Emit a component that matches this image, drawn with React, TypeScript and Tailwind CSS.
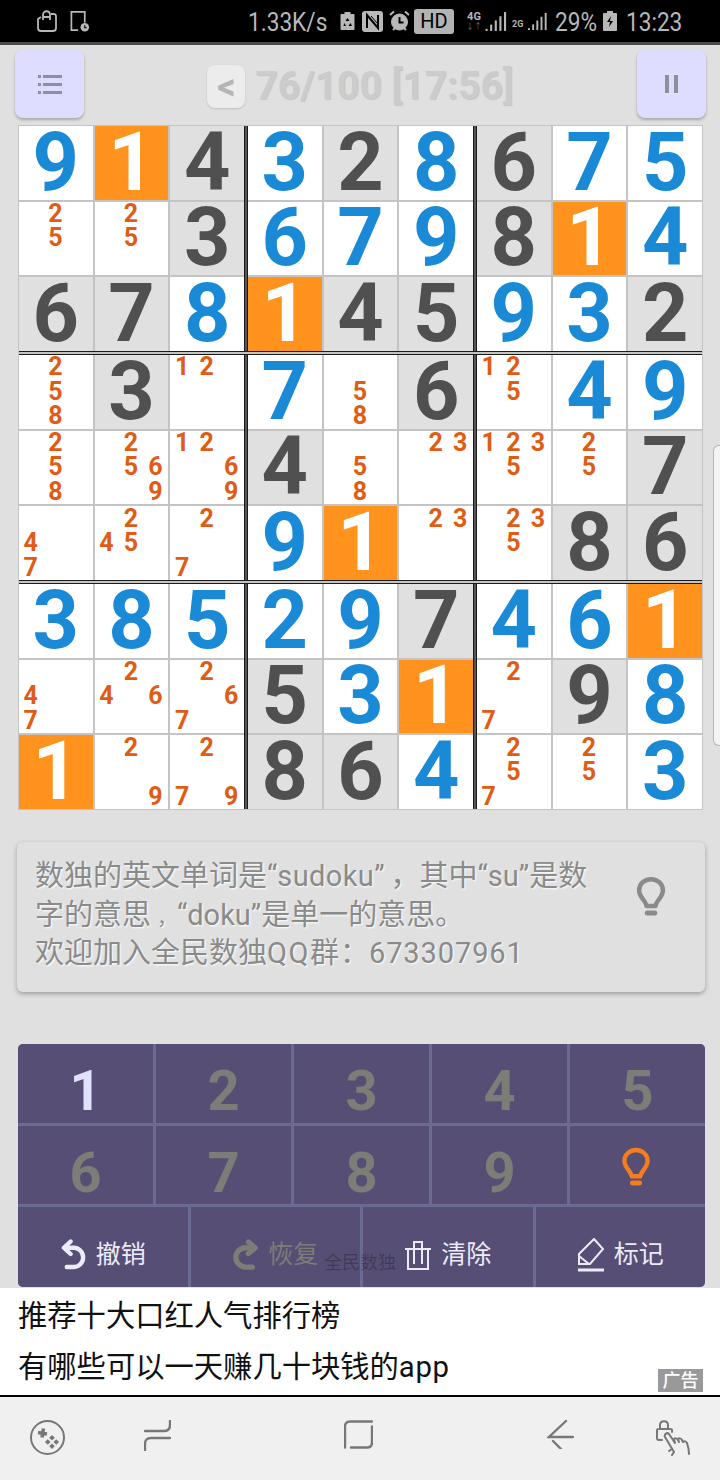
import type { ReactNode } from 'react';

const ROBOTO = "font-['Roboto',_'Noto_Sans_CJK_SC',_sans-serif]";

// b = blue, d = dark on grey, o = orange; digits after "n" are pencil notes
const BOARD: string[][] = [
  ['9b', '1o', '4d', '3b', '2d', '8b', '6d', '7b', '5b'],
  ['n25', 'n25', '3d', '6b', '7b', '9b', '8d', '1o', '4b'],
  ['6d', '7d', '8b', '1o', '4d', '5d', '9b', '3b', '2d'],
  ['n258', '3d', 'n12', '7b', 'n58', '6d', 'n125', '4b', '9b'],
  ['n258', 'n2569', 'n1269', '4d', 'n58', 'n23', 'n1235', 'n25', '7d'],
  ['n47', 'n245', 'n27', '9b', '1o', 'n23', 'n235', '8d', '6d'],
  ['3b', '8b', '5b', '2b', '9b', '7d', '4b', '6b', '1o'],
  ['n47', 'n246', 'n267', '5d', '3b', '1o', 'n27', '9d', '8b'],
  ['1o', 'n29', 'n279', '8d', '6d', '4b', 'n257', 'n25', '3b'],
];

function Cell({ value }: { value: string }) {
  if (value[0] === 'n') {
    return (
      <div className="bg-white grid grid-cols-3 grid-rows-3">
        {[1, 2, 3, 4, 5, 6, 7, 8, 9].map(n => (
          <span key={n} className="flex items-center justify-center pr-[1px] text-[25px] leading-[22px] font-bold text-[#e05c14]">
            {value.includes(String(n)) ? n : ''}
          </span>
        ))}
      </div>
    );
  }
  const kind = value[1];
  const tone = kind === 'b' ? 'bg-white text-[#1a8ad6]' : kind === 'd' ? 'bg-[#e0e0e0] text-[#505050]' : 'bg-[#ff931e] text-white';
  return (
    <div className={`flex items-center justify-center text-[81px] leading-[70px] font-bold ${tone}`}>{value[0]}</div>
  );
}

function Block({ row, col }: { row: number; col: number }) {
  const cells: string[] = [];
  for (let r = row; r < row + 3; r++) {
    for (let c = col; c < col + 3; c++) cells.push(BOARD[r][c]);
  }
  return (
    <div className="w-[225px] h-[225px] grid grid-cols-3 grid-rows-3 gap-[2px]">
      {cells.map((v, i) => <Cell key={i} value={v} />)}
    </div>
  );
}

function BoardRow({ row }: { row: number }) {
  return (
    <div className="flex">
      <Block row={row} col={0} />
      <div className="w-[4px] bg-[#555] border-x border-[#1c1c1c]" />
      <Block row={row} col={3} />
      <div className="w-[4px] bg-[#555] border-x border-[#1c1c1c]" />
      <Block row={row} col={6} />
    </div>
  );
}

function Bulb({ className }: { className: string }) {
  return (
    <svg viewBox="0 0 24 32" className={className} fill="none" stroke="currentColor" strokeWidth="3.6" strokeLinecap="round" strokeLinejoin="round">
      <path d="M12 2.500C6.500 2.500 2.500 6.600 2.500 11.500c0 3.800 2.600 6.200 4.400 9 .8 1.200 1.300 2.200 1.500 3.500h7.200c.2-1.300.7-2.300 1.500-3.500 1.800-2.800 4.400-5.200 4.400-9 0-4.900-4-9-9.500-9z" />
      <path d="M9 29.500h6" strokeWidth="4" />
    </svg>
  );
}

function KeyNum({ n, active }: { n: number; active?: boolean }) {
  return (
    <div className={`flex items-center justify-center pt-[15px] text-[56px] leading-[50px] font-bold ${active ? 'text-[#e0e0ff]' : 'text-[#7d7d78]'}`}>{n}</div>
  );
}

function Action({ icon, label, dim }: { icon: ReactNode; label: string; dim?: boolean }) {
  return (
    <div className={`flex items-center justify-center gap-[9px] pt-[15px] text-[25px] ${dim ? 'text-[#7d7d78]' : 'text-[#ecebfa]'}`}>
      {icon}
      <span>{label}</span>
    </div>
  );
}

function StatusText({ w, ml, children }: { w: string; ml: string; children: ReactNode }) {
  return (
    <span className={`${w} ${ml} block origin-left scale-x-[0.87] whitespace-nowrap pt-[2px] text-[26px] leading-none text-[#b8b8b8]`}>{children}</span>
  );
}

function SignalBars({ className }: { className: string }) {
  return (
    <svg viewBox="0 0 20 20" className={className} fill="#b8b8b8">
      <rect x="0" y="17" width="2" height="2" />
      <rect x="4.400" y="13" width="2" height="6" />
      <rect x="8.800" y="9" width="2" height="10" />
      <rect x="13.200" y="5" width="2" height="14" />
      <rect x="17.600" y="1" width="2" height="18" />
    </svg>
  );
}

export default function App() {
  return (
    <div className={`relative w-[720px] h-[1480px] overflow-hidden flex flex-col bg-[#e0e0e0] ${ROBOTO}`}>
      {/* status bar */}
      <div className="h-[45px] shrink-0 bg-black border-b-[3px] border-[#4a4a4a] flex items-center">
        <svg viewBox="0 0 20 22" className="ml-[37px] w-[20px] h-[22px]" fill="none" stroke="#b8b8b8" strokeWidth="1.8">
          <path d="M4 7L1 9v9c0 2 1 3 3 3h12c2 0 3-1 3-3V6c0-1-1-2-2-2h-3" />
          <path d="M6 10V5c0-5 7-5 7 0v5M6 7h7" />
        </svg>
        <svg viewBox="0 0 20 22" className="ml-[13px] w-[20px] h-[21px]" fill="none" stroke="#b8b8b8" strokeWidth="1.8">
          <path d="M8 20H1V1h14v11" />
          <circle cx="15" cy="17" r="4.500" fill="#b8b8b8" stroke="none" />
          <path d="M15 15v2.500h2" stroke="#000" strokeWidth="1.200" />
        </svg>
        <StatusText w="w-[79px]" ml="ml-[158px]">1.33K/s</StatusText>
        <svg viewBox="0 0 14 18" className="ml-[13px] w-[15px] h-[18px]" fill="#b8b8b8">
          <path d="M4 0h6v2h3c.6 0 1 .4 1 1v14c0 .6-.4 1-1 1H1c-.6 0-1-.4-1-1V3c0-.6.4-1 1-1h3z" />
          <path d="M7 6l2 3H5zM4 11l1.500 3H3zM10 11l1.500 3H8z" fill="#000" />
        </svg>
        <svg viewBox="0 0 21 21" className="ml-[7px] w-[21px] h-[21px]">
          <rect width="21" height="21" rx="3" fill="#b8b8b8" />
          <path d="M5 17V4l11 13V4" fill="none" stroke="#000" strokeWidth="2" />
          <path d="M9 5l6 7" stroke="#000" strokeWidth="1" />
        </svg>
        <svg viewBox="0 0 21 22" className="ml-[6px] w-[21px] h-[22px]" fill="none" stroke="#b8b8b8">
          <circle cx="10.500" cy="12" r="8" fill="#b8b8b8" />
          <path d="M10.500 7v5.500h4" stroke="#000" strokeWidth="2" />
          <path d="M1 5l4-3.500M20 5l-4-3.500M4 20l2-2M17 20l-2-2" strokeWidth="2" />
        </svg>
        <span className="ml-[4px] w-[40px] h-[25px] rounded-[3px] bg-[#b3b3b3] text-black text-[20px] leading-[25px] text-center">HD</span>
        <div className="ml-[12px] w-[16px] flex flex-col items-center text-[#b8b8b8]">
          <span className="text-[11px] leading-[12px] font-bold">4G</span>
          <span className="text-[8px] leading-[8px] text-[#666]">↓↑</span>
        </div>
        <SignalBars className="ml-[3px] w-[22px] h-[21px]" />
        <span className="ml-[5px] w-[16px] text-[9px] font-bold text-[#b8b8b8] mt-[8px]">2G</span>
        <SignalBars className="w-[19px] h-[21px]" />
        <StatusText w="w-[40px]" ml="ml-[8px]">29%</StatusText>
        <svg viewBox="0 0 14 20" className="ml-[8px] w-[14px] h-[20px]" fill="#b8b8b8">
          <path d="M4 0h6v2h3c.6 0 1 .4 1 1v16c0 .6-.4 1-1 1H1c-.6 0-1-.4-1-1V3c0-.6.4-1 1-1h3z" />
          <path d="M8 5L4 11h3l-1 5 4-6H7z" fill="#000" />
        </svg>
        <StatusText w="w-[55px]" ml="ml-[9px]">13:23</StatusText>
      </div>

      {/* title row */}
      <div className="h-[73px] shrink-0 pt-[5px] pl-[15px] pr-[14px] flex items-start">
        <div className="w-[69px] h-[68px] rounded-[8px] bg-[#dedcff] shadow-[0_2px_3px_rgba(0,0,0,0.25)] flex items-center justify-center">
          <svg viewBox="0 0 24 20" className="w-[24px] h-[20px]" fill="#8f8f9c">
            <rect x="0" y="1" width="3" height="3" />
            <rect x="5" y="1" width="19" height="3" />
            <rect x="0" y="9" width="3" height="3" />
            <rect x="5" y="9" width="19" height="3" />
            <rect x="0" y="17" width="3" height="3" />
            <rect x="5" y="17" width="19" height="3" />
          </svg>
        </div>
        <div className="flex-1 flex items-center justify-center pt-[15px]">
          <span className="w-[38px] h-[43px] rounded-[8px] bg-[#ececec] shadow-[0_1px_2px_rgba(0,0,0,0.15)] flex items-center justify-center text-[36px] leading-none font-bold text-[#b5b5b5]">&lt;</span>
          <span className="ml-[10px] text-[39px] leading-none font-bold text-[#cccccc] [text-shadow:1px_1px_1px_rgba(0,0,0,0.12)]">76/100 [17:56]</span>
        </div>
        <div className="w-[69px] h-[68px] rounded-[8px] bg-[#dedcff] shadow-[0_2px_3px_rgba(0,0,0,0.25)] flex items-center justify-center gap-[5px]">
          <div className="w-[4px] h-[18px] bg-[#8f8f9c]" />
          <div className="w-[4px] h-[18px] bg-[#8f8f9c]" />
        </div>
      </div>

      {/* board */}
      <div className="ml-[18px] mt-[7px] w-[685px] h-[685px] shrink-0 border border-[#c4c4c4] bg-[#c4c4c4] flex flex-col">
        <BoardRow row={0} />
        <div className="h-[4px] bg-[#c4c4c4] border-y border-[#1c1c1c]" />
        <BoardRow row={3} />
        <div className="h-[4px] bg-[#c4c4c4] border-y border-[#1c1c1c]" />
        <BoardRow row={6} />
      </div>

      {/* tip card */}
      <div className="ml-[17px] mt-[32px] w-[688px] h-[150px] shrink-0 rounded-[6px] bg-[#e0e0e0] shadow-[0_2px_5px_rgba(0,0,0,0.3)] pl-[18px] pt-[15px] flex text-[#8a8a8a] text-[29px] leading-[38px] [text-shadow:1px_1px_2px_#fff]">
        <div className="w-[583px] whitespace-nowrap *:h-[38.5px]">
          <div>
            数独的英文单词是“<span className="tracking-[0.4px]">sudoku</span>”<span className="pl-[6px]">，</span>其中“su”是数
          </div>
          <div>
            字的意思<span className="pl-[6px] text-[20px]">，</span>“doku”是单一的意思。
          </div>
          <div>
            欢迎加入全民数独<span className="tracking-[1.5px]">QQ</span>群<span className="pl-px">：</span><span className="tracking-[0.9px]">673307961</span>
          </div>
        </div>
        <Bulb className="ml-[18px] mt-[19px] w-[30px] h-[40px] text-[#8a8a8a]" />
      </div>

      {/* keypad */}
      <div className="relative ml-[18px] mt-[52px] w-[687px] h-[243px] shrink-0 rounded-[5px] overflow-hidden bg-[#6b6a92] flex flex-col gap-[3px]">
        <div className="h-[79px] grid grid-cols-5 gap-[3px] *:bg-[#574e75]">
          <KeyNum n={1} active />
          <KeyNum n={2} />
          <KeyNum n={3} />
          <KeyNum n={4} />
          <KeyNum n={5} />
        </div>
        <div className="h-[78px] grid grid-cols-5 gap-[3px] *:bg-[#574e75]">
          <KeyNum n={6} />
          <KeyNum n={7} />
          <KeyNum n={8} />
          <KeyNum n={9} />
          <div className="flex items-center justify-center pr-[4px] pt-[2px]">
            <Bulb className="w-[30px] h-[39px] text-[#f57c1f]" />
          </div>
        </div>
        <div className="flex-1 grid grid-cols-4 gap-[3px] *:bg-[#574e75]">
          <Action
            label="撤销"
            icon={
              <svg viewBox="0 0 28 32" className="w-[27px] h-[31px]" fill="none" stroke="currentColor" strokeWidth="4.500" strokeLinecap="round" strokeLinejoin="round">
                <path d="M11 2.500L4 9l7 6.500" />
                <path d="M5 9h9a9 9 0 0 1 0 20H7" />
              </svg>
            }
          />
          <Action
            dim
            label="恢复"
            icon={
              <svg viewBox="0 0 28 32" className="w-[27px] h-[31px]" fill="none" stroke="currentColor" strokeWidth="5.500" strokeLinecap="round" strokeLinejoin="round">
                <path d="M17 3l7 6-7 6" />
                <path d="M23 9h-9a9 9 0 0 0 0 20h7" />
              </svg>
            }
          />
          <Action
            label="清除"
            icon={
              <svg viewBox="0 0 28 30" className="w-[28px] h-[30px]" fill="none" stroke="currentColor" strokeWidth="2">
                <path d="M1 9h26M4 9v20h20V9M10 9v15M18 9v15M10 9V2h8v7" />
              </svg>
            }
          />
          <Action
            label="标记"
            icon={
              <svg viewBox="0 0 28 34" className="w-[28px] h-[34px]" fill="none" stroke="currentColor" strokeWidth="2">
                <path d="M17 1l9 10-13 15H2V16z" />
                <path d="M2 18l10 8" />
                <path d="M1 32h26" strokeWidth="3" />
              </svg>
            }
          />
        </div>
        <span className="absolute left-[306px] top-[210px] text-[18px] leading-none text-black/25">全民数独</span>
      </div>

      {/* ad */}
      <div className="relative mt-px h-[107px] shrink-0 bg-white pl-[18px] text-[29.3px] leading-[51px] text-[#111] pt-[3px]">
        <div>推荐十大口红人气排行榜</div>
        <div>有哪些可以一天赚几十块钱的<span className="tracking-[0.6px]">app</span></div>
        <span className="absolute right-[17px] bottom-[3px] w-[45px] h-[23px] bg-[#999] text-white text-[18px] leading-[23px] font-medium text-center">广告</span>
      </div>

      {/* nav bar */}
      <div className="flex-1 bg-[#f0f0f0] border-t-2 border-black pl-[30px] pt-[23px] flex items-start text-[#777]">
        <svg viewBox="0 0 35 35" className="w-[35px] h-[35px]" fill="none" stroke="currentColor" strokeWidth="2">
          <circle cx="17.500" cy="17.500" r="16.500" />
          <path d="M8 12.500l9 1.500M13.500 8.500l-1.500 9" strokeWidth="3.500" />
          <g fill="currentColor" stroke="none" transform="rotate(45 22 22)">
            <rect x="17" y="17" width="4" height="4" />
            <rect x="23" y="17" width="4" height="4" />
            <rect x="17" y="23" width="4" height="4" />
            <rect x="23" y="23" width="4" height="4" />
          </g>
        </svg>
        <svg viewBox="0 0 27 31" className="ml-[79px] w-[27px] h-[31px]" fill="none" stroke="currentColor" strokeWidth="2.400" strokeLinecap="round">
          <path d="M1 11h19q6 0 6-6V1M26 18H7q-6 0-6 6v6" />
        </svg>
        <svg viewBox="0 0 29 28" className="ml-[173px] w-[29px] h-[29px]" fill="none" stroke="currentColor" strokeWidth="2.400" strokeLinecap="round">
          <path d="M28 1H6Q1 1 1 6v21M28 6v16q0 5-5 5H7" />
        </svg>
        <svg viewBox="0 0 27 29" className="ml-[174px] w-[27px] h-[29px]" fill="none" stroke="currentColor" strokeWidth="2.400" strokeLinecap="round">
          <path d="M19 1L2 17h24M6 21l8 8" />
        </svg>
        <svg viewBox="0 0 37 36" className="ml-[80px] w-[37px] h-[36px]" fill="none" stroke="currentColor" strokeWidth="2" strokeLinecap="round" strokeLinejoin="round">
          <path d="M6 9V5c0-5 8-5 8 0v4M8 20H5c-1 0-2-1-2-2v-8c0-1 1-1 2-1h11c1 0 2 0 2 1v2" />
          <path d="M18 35l2-3-9-15c-1-3 2-5 4-3l6 9-1-4c1-1 3-1 4 1l1 2-1-3c1-1 3-1 4 1l1 2c1-1 3-1 4 1 1 3 2 7 2 11" />
          <path d="M15 31l3-2" />
        </svg>
      </div>

      {/* edge panel handle */}
      <div className="absolute right-0 top-[445px] w-[7px] h-[301px] rounded-l-[6px] bg-[#f4f4f4] border border-r-0 border-[#b5b5b5]" />
    </div>
  );
}
